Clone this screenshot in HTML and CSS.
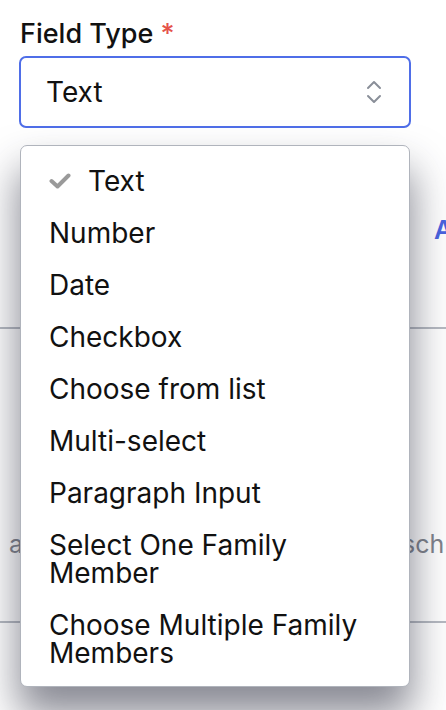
FILE: index.html
```html
<!DOCTYPE html>
<html>
<head>
<meta charset="utf-8">
<link rel="stylesheet" href="styles.css">
</head>
<body>
<div class="page">
  <label class="field-label">Field Type <span class="req">*</span></label>
  <div class="select">
    <span class="select-value">Text</span>
    <svg class="chev" width="16" height="24" viewBox="0 0 16 24"><path d="M2 8 L8 2 L14 8 M2 16 L8 22 L14 16" fill="none" stroke="#8a8f99" stroke-width="2" stroke-linecap="round" stroke-linejoin="round"/></svg>
  </div>
  <div class="behind">
    <div class="row-add"><span class="add">A</span></div>
    <div class="divider d1"></div>
    <div class="row-help"><span class="help-l">a</span><span class="help-r">sch</span></div>
    <div class="divider d2"></div>
  </div>
  <ul class="menu">
    <li class="opt selected"><svg class="check" width="22" height="16" viewBox="0 0 22 16"><path d="M2.5 8 L8.5 13.5 L19.5 2.5" fill="none" stroke="#9a9a9a" stroke-width="4" stroke-linecap="round" stroke-linejoin="round"/></svg>Text</li>
    <li class="opt">Number</li>
    <li class="opt">Date</li>
    <li class="opt">Checkbox</li>
    <li class="opt">Choose from list</li>
    <li class="opt">Multi-select</li>
    <li class="opt">Paragraph Input</li>
    <li class="opt">Select One Family Member</li>
    <li class="opt">Choose Multiple Family Members</li>
  </ul>
</div>
</body>
</html>
```
FILE: styles.css
```css
html, body {
  margin: 0;
  padding: 0;
  background: #ffffff;
}
body {
  font-family: Inter, "Noto Sans", sans-serif;
  color: #111;
  width: 446px;
  height: 710px;
  overflow: hidden;
}
.page {
  position: relative;
  padding: 18px 0 0 0;
  height: 710px;
  box-sizing: border-box;
}
.field-label {
  display: block;
  margin-left: 20px;
  font-size: 27px;
  line-height: 32px;
  font-weight: 500;
  color: #111;
}
.req {
  color: #e5534b;
}
.select {
  margin: 6px 0 0 19px;
  width: 392px;
  height: 72px;
  box-sizing: border-box;
  border: 2px solid #4f6ee8;
  border-radius: 7px;
  display: flex;
  align-items: center;
  justify-content: space-between;
  padding: 0 27px 0 25px;
  font-size: 28px;
}
.chev {
  display: block;
}
.behind {
  display: flex;
  flex-direction: column;
}
.row-add {
  margin-top: 86px;
  padding-left: 434px;
  white-space: nowrap;
  font-size: 26px;
  line-height: 32px;
  font-weight: 600;
  color: #4a63e0;
}
.divider {
  height: 2px;
  background: #b6bac2;
}
.d1 {
  margin-top: 81px;
}
.row-help {
  margin-top: 200px;
  display: grid;
  grid-template-columns: 402px auto;
  white-space: nowrap;
  font-size: 25px;
  line-height: 30px;
  color: #80838c;
}
.help-l {
  padding-left: 9px;
}
.d2 {
  margin-top: 62px;
}
.menu {
  position: absolute;
  left: 20px;
  top: 145px;
  width: 390px;
  box-sizing: border-box;
  margin: 0;
  padding: 9px 0 7px 0;
  list-style: none;
  background: #fff;
  border: 1px solid #b0b4bc;
  border-radius: 7px;
  box-shadow: 0 26px 40px 2px rgba(40, 42, 60, 0.55);
}
.opt {
  display: flex;
  align-items: center;
  padding: 12px 40px 12px 28px;
  font-size: 28px;
  line-height: 28px;
  color: #111;
}
.selected {
  gap: 17px;
}
.check {
  display: block;
  flex: none;
}
```
